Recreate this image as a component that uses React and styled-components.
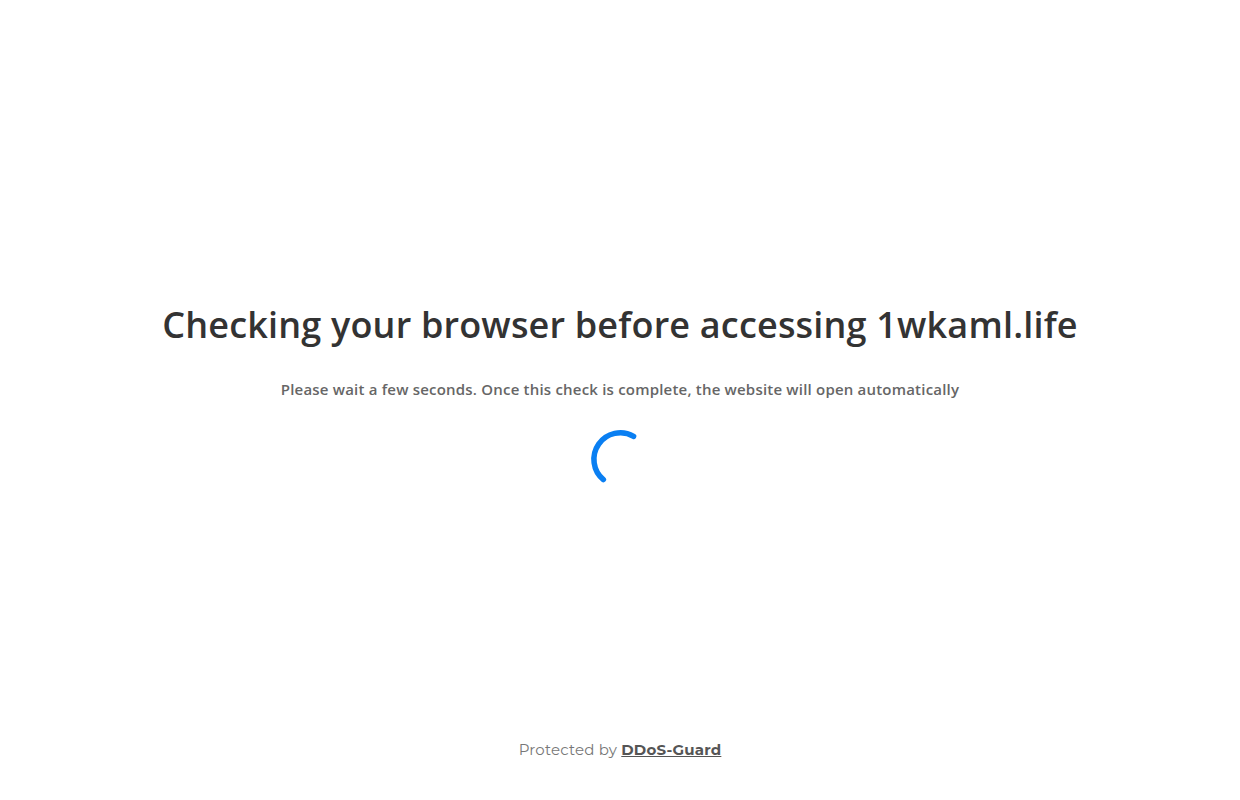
import React from "react";
import styled, { createGlobalStyle } from "styled-components";

const GlobalStyle = createGlobalStyle`
  html, body {
    margin: 0;
    padding: 0;
    background: #fff;
  }
  body {
    font-family: "Open Sans", "Noto Sans", sans-serif;
  }
`;

const Page = styled.div`
  height: 800px;
  display: flex;
  flex-direction: column;
  align-items: center;
`;

const Main = styled.div`
  flex: 1;
  display: flex;
  flex-direction: column;
  align-items: center;
  padding-top: 300px;
`;

const Title = styled.h1`
  margin: 0;
  font-size: 36px;
  font-weight: 600;
  line-height: 49px;
  letter-spacing: 0.18px;
  color: #333;
  text-align: center;
`;

const Subtitle = styled.p`
  margin: 30px 0 0;
  font-size: 15px;
  font-weight: 600;
  line-height: 20px;
  letter-spacing: 0.2px;
  color: #666;
  text-align: center;
`;

const Spinner = styled.svg`
  margin-top: 28px;
  width: 64px;
  height: 64px;
`;

const Footer = styled.footer`
  padding-bottom: 40px;
  font-family: "Montserrat", "Noto Sans", sans-serif;
  font-size: 15px;
  line-height: 20px;
  color: #777;
  letter-spacing: 0.2px;
  a {
    color: #555;
    font-weight: 700;
    text-decoration: underline;
  }
`;

export default function App() {
  return (
    <>
      <GlobalStyle />
      <Page>
        <Main>
          <Title>Checking your browser before accessing 1wkaml.life</Title>
          <Subtitle>
            Please wait a few seconds. Once this check is complete, the website will open automatically
          </Subtitle>
          <Spinner viewBox="0 0 64 64">
            <path
              d="M45.6 9.3 A26.5 26.5 0 0 0 15.4 52.6"
              fill="none"
              stroke="#0a7ff2"
              strokeWidth="5.5"
              strokeLinecap="round"
            />
          </Spinner>
        </Main>
        <Footer>
          Protected by <a href="#">DDoS-Guard</a>
        </Footer>
      </Page>
    </>
  );
}
